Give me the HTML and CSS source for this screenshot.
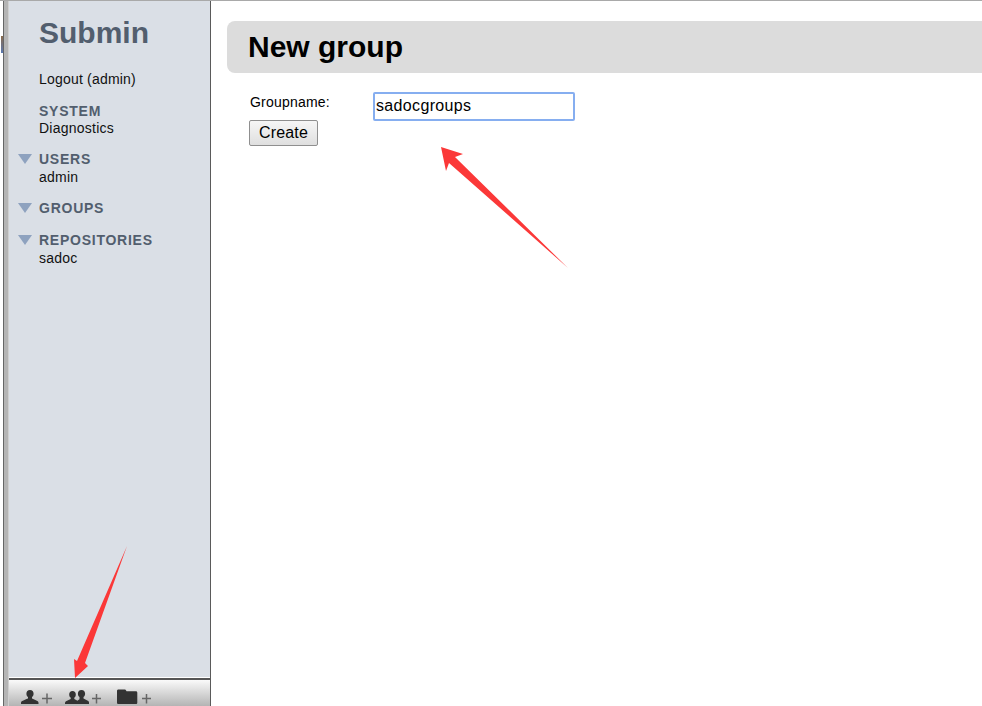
FILE: index.html
```html
<!DOCTYPE html>
<html lang="en">
<head>
<meta charset="utf-8">
<title>Submin</title>
<link rel="stylesheet" href="styles.css">
</head>
<body>
<div class="page">
  <div class="edge"><span class="peek"></span></div>
  <aside class="sidebar">
    <div class="nav">
      <h1 class="brand">Submin</h1>
      <a class="logout">Logout (admin)</a>
      <section class="sys">
        <h2 class="head">SYSTEM</h2>
        <a class="item">Diagnostics</a>
      </section>
      <section class="grp g-users">
        <h2 class="head">USERS</h2>
        <a class="item">admin</a>
      </section>
      <section class="grp g-groups">
        <h2 class="head">GROUPS</h2>
      </section>
      <section class="grp g-repos">
        <h2 class="head">REPOSITORIES</h2>
        <a class="item">sadoc</a>
      </section>
    </div>
    <div class="toolbar">
      <svg class="ti ti-user" viewBox="0 0 32 17"><path d="M9 1c2.300 0 3.600 1.600 3.600 3.700 0 1.500-.7 2.800-1.600 3.400v1.300c1.900.8 3.800 1.700 5.300 2.700.7.400 1.200 1 1.200 1.900V15H0v-1c0-.9.500-1.500 1.200-1.900C2.700 11.100 5.100 10.200 7 9.400V8.100C6 7.500 5.400 6.200 5.400 4.700 5.400 2.600 6.700 1 9 1z"/><path class="plus" d="M21 9.500h10M26 4.500v10"/></svg>
      <svg class="ti ti-users" viewBox="0 0 37 17"><path d="M7.500 2c2.100 0 3.300 1.400 3.300 3.400 0 1.400-.6 2.600-1.500 3.200v1.300l2.700 1.600V15H0v-1c0-.8.400-1.300 1-1.700l4.700-2.400V8.600C4.800 8 4.200 6.800 4.200 5.400 4.200 3.400 5.400 2 7.500 2z"/><path d="M16.500 1c2.300 0 3.600 1.600 3.600 3.700 0 1.500-.7 2.800-1.600 3.400v1.300c1.800.8 3.300 1.600 4.300 2.300.7.400 1.200 1 1.200 1.900V15H10.500v-1c0-.9.500-1.500 1.200-1.900.8-.7 1.800-1.300 2.800-1.900V8.100c-1-.6-1.600-1.900-1.600-3.400 0-2.100 1.300-3.700 3.600-3.700z"/><path class="plus" d="M27 9.500h9M31.500 5v9.500"/></svg>
      <svg class="ti ti-folder" viewBox="0 0 35 17"><path d="M0 2C0 1 .6.500 1.500.500h6C8.500.500 9 1 9.500 2.300h9.300c1 0 1.500.6 1.500 1.500v9.700c0 1-.5 1.500-1.500 1.500H1.500C.6 15 0 14.500 0 13.500z"/><path class="plus" d="M25 9.500h9M29.500 5v9.500"/></svg>
    </div>
  </aside>
  <main class="content">
    <h1 class="title">New group</h1>
    <form class="form">
      <div class="row">
        <label class="lbl" for="g">Groupname:</label>
        <input class="field" id="g" type="text" value="sadocgroups">
      </div>
      <button class="btn" type="button">Create</button>
    </form>
  </main>
  <svg class="arrow" viewBox="0 0 982 706"><polygon points="441,147 463,154 455,157 568,268 449,163 446,171"/></svg>
  <svg class="arrow" viewBox="0 0 982 706"><polygon points="127,546 85,663 88,666 75,678 74,659 77,661"/></svg>
</div>
</body>
</html>
```
FILE: styles.css
```css
* { box-sizing: border-box; }
html, body { margin: 0; height: 100%; overflow: hidden; background: #fff; }
body { font-family: "Liberation Sans", Arial, sans-serif; color: #000; }
.page { position: relative; display: flex; width: 982px; height: 706px; border-top: 1px solid #a9a9a9; }
.edge { position: relative; width: 9px; flex: none; background: linear-gradient(90deg, #fff 0 3px, #666 3px 4px, #b5b5b5 4px 8px, #d0d0d0 8px 9px); }
.peek { position: absolute; left: 1px; top: 35px; width: 2px; height: 17px; background: linear-gradient(#8a6a4a, #5a78b0); }
.sidebar { width: 202px; flex: none; display: flex; flex-direction: column; background: #fff; border-right: 1px solid #5a5a5a; }
.nav { flex: 1; background: #dadfe6; padding: 16px 0 0 30px; }
.brand { margin: 0 0 22px; font-size: 30px; line-height: 32px; font-weight: bold; color: #525e6e; }
.logout { display: block; font-size: 14px; line-height: 16px; letter-spacing: .2px; color: #111; }
.head { margin: 0; font-size: 14px; line-height: 16px; font-weight: bold; letter-spacing: .75px; color: #525e6e; }
.item { display: block; font-size: 14px; line-height: 19px; letter-spacing: .25px; color: #111; }
.grp .item { margin-top: 1px; }
.sys { margin-top: 16px; }
.grp { position: relative; }
.grp::before { content: ""; position: absolute; left: -21px; top: 3px; border-left: 7px solid transparent; border-right: 7px solid transparent; border-top: 10px solid #8ea2bf; }
.g-users { margin-top: 13px; }
.g-groups { margin-top: 13px; }
.g-repos { margin-top: 16px; }
.toolbar { height: 28px; flex: none; margin-top: 1px; border-top: 2px solid #555; display: flex; align-items: flex-start; padding: 9px 0 0 12px; background: linear-gradient(#fafafa, #b4b4b4); overflow: hidden; }
.ti { height: 17px; flex: none; fill: #333; }
.ti .plus { fill: none; stroke: #666; stroke-width: 1.500; }
.ti-user { width: 32px; }
.ti-users { width: 37px; margin-left: 12px; }
.ti-folder { width: 35px; margin-left: 15px; }
.content { flex: 1; padding: 20px 0 0 16px; min-width: 0; }
.title { margin: 0; height: 52px; padding-left: 21px; background: #dcdcdc; border-radius: 8px 0 0 8px; font-size: 30px; line-height: 52px; font-weight: bold; }
.form { padding: 19px 0 0 22px; }
.row { display: flex; align-items: flex-start; }
.lbl { width: 124px; flex: none; padding-left: 1px; font-size: 14px; line-height: 16px; letter-spacing: .2px; margin-top: 2px; }
.field { width: 202px; height: 29px; padding: 0 1px 1px; border: 2px solid #86aef0; border-radius: 2px; outline: none; background: #fff; font: 16px "Liberation Sans", Arial, sans-serif; letter-spacing: .35px; color: #000; }
.btn { display: block; width: 69px; height: 26px; margin-top: -1px; padding: 0; border: 1px solid #8f8f8f; border-radius: 2px; background: linear-gradient(#f6f6f6, #dfdfdf); font: 16px "Liberation Sans", Arial, sans-serif; letter-spacing: .2px; color: #000; }
.arrow { position: absolute; left: 0; top: -1px; width: 982px; height: 706px; fill: #fb3838; pointer-events: none; }
```
